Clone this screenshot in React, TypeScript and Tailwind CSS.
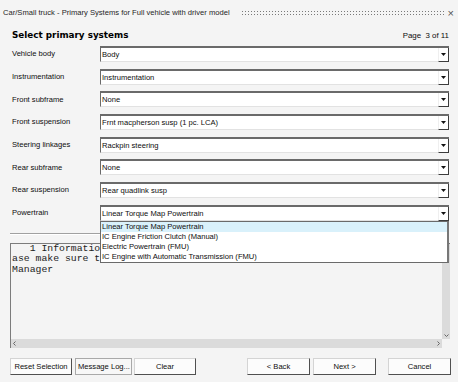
import React from 'react';

const rows = [
  { label: 'Vehicle body', value: 'Body' },
  { label: 'Instrumentation', value: 'Instrumentation' },
  { label: 'Front subframe', value: 'None' },
  { label: 'Front suspension', value: 'Frnt macpherson susp (1 pc. LCA)' },
  { label: 'Steering linkages', value: 'Rackpin steering' },
  { label: 'Rear subframe', value: 'None' },
  { label: 'Rear suspension', value: 'Rear quadlink susp' },
  { label: 'Powertrain', value: 'Linear Torque Map Powertrain', open: true },
];

const powertrains = [
  'Linear Torque Map Powertrain',
  'IC Engine Friction Clutch (Manual)',
  'Electric Powertrain (FMU)',
  'IC Engine with Automatic Transmission (FMU)',
];

// only the part left of the open dropdown is visible
const logText = ['   1 Informatio', 'ase make sure t', 'Manager'];

function Arrow() {
  return (
    <svg width="5" height="3" viewBox="0 0 5 3">
      <path d="M0 0h5L2.5 3z" fill="#111" />
    </svg>
  );
}

function Combo({ value, open }: { value: string; open?: boolean }) {
  return (
    <div className="relative flex-1 h-[16px] flex bg-white border-t-2 border-l border-b border-t-[#6a6a6a] border-l-[#6a6a6a] border-b-[#e2e2e2]">
      <span className="flex-1 pl-[1px] leading-[13px] whitespace-nowrap overflow-hidden">{value}</span>
      <div className="w-[11px] flex items-center justify-center bg-white border-l border-l-[#efefef] border-r border-r-[#3c3c3c] mb-[-1px] border-b border-b-[#3c3c3c]">
        <Arrow />
      </div>

      {open && (
        <ul className="absolute z-10 left-[-1px] right-0 top-[14px] bg-white border border-[#6a6a6a] border-r-2 border-r-[#777]">
          {powertrains.map((p, i) => (
            <li
              key={p}
              className={`h-[10px] leading-[10px] pl-[1px] whitespace-nowrap ${i === 0 ? 'bg-[#d9f1fb]' : ''}`}
            >
              {p}
            </li>
          ))}
        </ul>
      )}
    </div>
  );
}

function Btn({ label, w, plain }: { label: string; w: string; plain?: boolean }) {
  return (
    <button
      className={`${w} h-[17px] leading-[15px] whitespace-nowrap overflow-hidden ${
        plain
          ? 'bg-[#f7f7f7] border border-[#a9a9a9] text-left pl-[2px]'
          : 'bg-[#fcfcfc] border border-[#d4d4d4] border-r-[#505050] border-b-[#505050] text-center'
      }`}
    >
      {label}
    </button>
  );
}

export default function App() {
  return (
    <div className="w-[458px] h-[382px] overflow-hidden flex flex-col bg-[#f4f4f4] text-[#0d0d0d] text-[7.6px] font-['Liberation_Sans',Arial,sans-serif]">
      {/* Title bar */}
      <div className="h-[26px] shrink-0 flex items-center pl-[3px] pr-[4px] text-[#262626]">
        <span className="whitespace-nowrap">Car/Small truck - Primary Systems for Full vehicle with driver model</span>
        <svg className="ml-auto mt-[1px]" width="202" height="5">
          <defs>
            <pattern id="grip" width="3" height="3" patternUnits="userSpaceOnUse">
              <rect width="1" height="1" fill="#7a7a7a" />
            </pattern>
          </defs>
          <rect width="202" height="5" fill="url(#grip)" />
        </svg>
        <span className="ml-[4px] text-[11px] text-[#555] leading-none">×</span>
      </div>

      {/* Heading */}
      <div className="h-[20px] shrink-0 flex items-center justify-between pl-[12px] pr-[9px]">
        <span className="font-['DejaVu_Sans',Verdana,sans-serif] font-bold text-[8.8px] text-black">Select primary systems</span>
        <span className="whitespace-pre text-[7.9px]">Page  3 of 11</span>
      </div>

      {/* Systems */}
      <div className="flex flex-col gap-[6.7px] pl-[12px] pr-[9px]">
        {rows.map(r => (
          <div key={r.label} className="flex items-center">
            <label className="w-[88px] shrink-0 whitespace-nowrap">{r.label}</label>
            <Combo value={r.value} open={r.open} />
          </div>
        ))}
      </div>

      <div className="mt-[12px] mx-[10px] h-px bg-[#a0a0a0] border-b border-white box-content" />

      {/* Log */}
      <div className="mt-[8px] ml-[10px] mr-[8px] h-[105px] flex flex-col border-l border-t border-[#7c7c7c]">
        <div className="flex flex-1 min-h-0">
          <pre className="flex-1 overflow-hidden pl-[1px] font-['Liberation_Mono','Courier_New',monospace] text-[9.8px] leading-[10.5px] text-[#222]">
            {logText.join('\n')}
          </pre>
          <div className="w-[8px] bg-[#dbdbdb] flex flex-col justify-end items-center pb-[2px]">
            <svg width="5" height="3" viewBox="0 0 5 3">
              <path d="M0.5 0.5L2.5 2.5L4.5 0.5" stroke="#666" fill="none" />
            </svg>
          </div>
        </div>
        <div className="h-[9px] flex">
          <div className="flex-1 bg-[#dbdbdb] flex items-center justify-between px-[2px]">
            <svg width="3" height="5" viewBox="0 0 3 5">
              <path d="M2.5 0.5L0.5 2.5L2.5 4.5" stroke="#666" fill="none" />
            </svg>
            <svg width="3" height="5" viewBox="0 0 3 5">
              <path d="M0.5 0.5L2.5 2.5L0.5 4.5" stroke="#666" fill="none" />
            </svg>
          </div>
          <div className="w-[8px]" />
        </div>
      </div>

      {/* Buttons */}
      <div className="mt-[10px] flex pl-[10px] pr-[7px]">
        <Btn label="Reset Selection" w="w-[62px]" />
        <div className="w-[3px]" />
        <Btn label="Message Log..." w="w-[57px]" plain />
        <div className="w-[2px]" />
        <Btn label="Clear" w="w-[62px]" />
        <div className="flex-1" />
        <Btn label="< Back" w="w-[63px]" />
        <div className="w-[3px]" />
        <Btn label="Next >" w="w-[63px]" />
        <div className="w-[12px]" />
        <Btn label="Cancel" w="w-[63px]" />
      </div>
    </div>
  );
}
